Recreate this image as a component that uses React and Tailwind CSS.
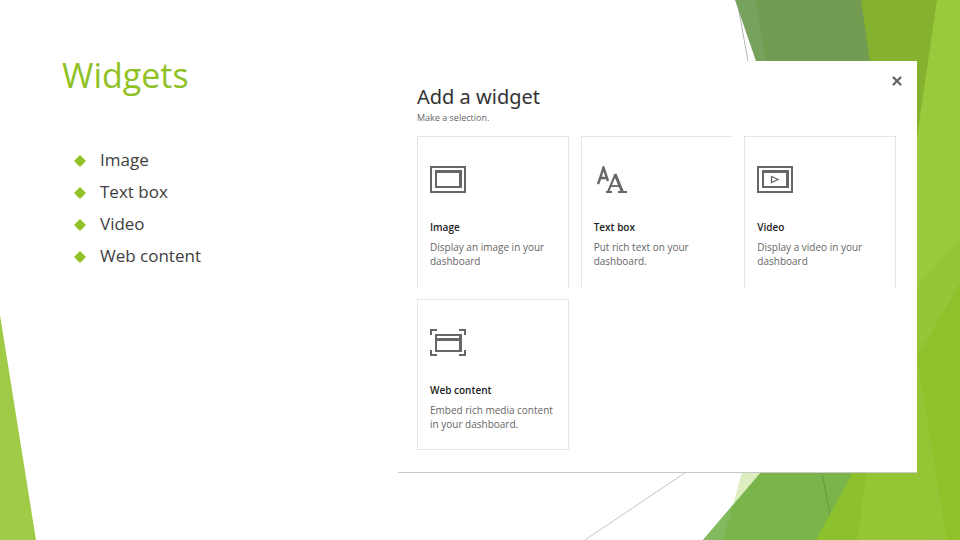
import { X } from 'lucide-react';

const topics = ['Image', 'Text box', 'Video', 'Web content'];

const ImageIcon = () => (
  <svg width="36" height="27" viewBox="0 0 36 27" fill="none" stroke="#666" strokeWidth="2">
    <path d="M1 1h34v25H1z" />
    <path d="M5 4h27v18H5z" fill="#666" stroke="none" />
    <path d="M7 7h22v13H7z" fill="#fff" stroke="none" />
  </svg>
);

const TextIcon = () => (
  <svg width="36" height="27" viewBox="0 0 36 27" fill="none" stroke="#666">
    <path d="M4 18 5.500 14 9.500 1.500 14 15M6 12h7" strokeWidth="2.400" />
    <path d="M14 26 21 9" strokeWidth="2" />
    <path d="M21 8 28.500 26" strokeWidth="3" />
    <path d="M17 20h9" strokeWidth="1.800" />
    <path d="M12 26h6M24 26h9" strokeWidth="2" />
  </svg>
);

const VideoIcon = () => (
  <svg width="36" height="27" viewBox="0 0 36 27" fill="none" stroke="#666" strokeWidth="2">
    <path d="M1 1h34v25H1z" />
    <path d="M5 4h27v18H5z" fill="#666" stroke="none" />
    <path d="M7 7h22v13H7z" fill="#fff" stroke="none" />
    <path d="M14.500 10.500v6l6.500-3z" strokeWidth="1.300" />
  </svg>
);

const WebIcon = () => (
  <svg width="36" height="27" viewBox="0 0 36 27" fill="none" stroke="#666" strokeWidth="2">
    <path d="M1 6V1h6M29 1h6v5M1 21v5h6M29 26h6v-5" />
    <path d="M5 5h27v18H5z" fill="#666" stroke="none" />
    <path d="M7 7h22v2H7zM7 12h22v9H7z" fill="#fff" stroke="none" />
  </svg>
);

const widgets = [
  {
    title: 'Image',
    description: 'Display an image in your dashboard',
    Icon: ImageIcon,
    border: 'border-x border-t',
  },
  {
    title: 'Text box',
    description: 'Put rich text on your dashboard.',
    Icon: TextIcon,
    border: 'border-l border-t',
  },
  {
    title: 'Video',
    description: 'Display a video in your dashboard',
    Icon: VideoIcon,
    border: 'border-x border-t',
  },
  {
    title: 'Web content',
    description: 'Embed rich media content in your dashboard.',
    Icon: WebIcon,
    border: 'border',
  },
];

/**
 * Faceted green shapes behind the slide
 */
const Backdrop = () => (
  <svg
    className="absolute inset-0 w-full h-full"
    viewBox="0 0 960 540"
    preserveAspectRatio="none"
    aria-hidden="true"
  >
    <path d="M0 315 36 540H0z" fill="#a0cb46" />
    <path d="M585 540 960 288" stroke="#c4c4c4" />
    <path d="M737 0 834 540" stroke="#b4b4b4" />
    {/* top */}
    <path d="M735 0H960V300H838z" fill="#76a25e" />
    <path d="M756 0H960V300H805z" fill="#729c52" />
    <path d="M861 0H960V400H920z" fill="#84b22e" />
    {/* bottom */}
    <path d="M742 472H761L733 505z" fill="#deeec0" />
    <path d="M761 472H960V540H703z" fill="#79b54b" />
    <path d="M733 505 703 540H723z" fill="#83ba60" />
    <path d="M822 472 830 515" stroke="#659b40" />
    <path d="M853 472H960V540H816z" fill="#8cc02c" />
    <path d="M867 472H960V540H857z" fill="#94c733" />
    <path d="M907 472H960V540H930z" fill="#90c42d" />
    {/* right */}
    <path d="M937 0H960V400H917V137z" fill="#99c93c" />
    <path d="M960 240V400H917V285z" fill="#95c638" />
    <path d="M917 340H930L947 540H930L907 472H917z" fill="#93c535" />
    <path d="M960 283V540H947L917 357z" fill="#8fc22a" />
  </svg>
);

const App = () => {
  return (
    <div className="relative min-h-screen overflow-hidden bg-white">
      <Backdrop />

      <div className="relative flex items-start pr-[43px]">
        {/* Slide text */}
        <section className="w-[398px] shrink-0 pl-[62px] pt-12 font-['Open_Sans','Noto_Sans',sans-serif]">
          <h1 className="text-[34px] leading-[54px] text-[#90c226]">Widgets</h1>
          <ul className="mt-[42px] pl-3">
            {topics.map((topic) => (
              <li key={topic} className="flex items-center gap-[14px] h-8 text-[17px] text-[#404040]">
                <svg width="12" height="12" viewBox="0 0 12 12" className="mt-0.5" aria-hidden="true">
                  <path d="M6 0l6 6-6 6-6-6z" fill="#90c226" />
                </svg>
                {topic}
              </li>
            ))}
          </ul>
        </section>

        {/* Add widget dialog */}
        <section className="flex-1 mt-[61px] pl-[19px] pr-[21px] pb-[22px] bg-white border-b border-[#c8c8c8] font-['Noto_Sans',sans-serif]">
          <div className="flex items-start justify-between">
            <header className="pt-[22px]">
              <h2 className="text-[20px] leading-7 text-[#333]">Add a widget</h2>
              <p className="font-['Open_Sans',sans-serif] text-[9px] leading-[14px] text-[#666]">Make a selection.</p>
            </header>
            <button type="button" aria-label="Close" className="mt-[13px] -mr-2 text-[#666]">
              <X size={14} strokeWidth={4} />
            </button>
          </div>

          <div className="mt-[11px] grid grid-cols-3 gap-3 font-['Open_Sans',sans-serif]">
            {widgets.map(({ title, description, Icon, border }) => (
              <button
                key={title}
                type="button"
                className={`flex flex-col items-start min-h-[151px] px-3 pt-[29px] text-left border-[#e6e6e6] ${border}`}
              >
                <Icon />
                <span className="mt-[26px] text-[10px] leading-4 font-semibold text-[#222]">{title}</span>
                <span className="mt-[5px] text-[10px] leading-[14px] text-[#666]">{description}</span>
              </button>
            ))}
          </div>
        </section>
      </div>
    </div>
  );
};

export default App;
